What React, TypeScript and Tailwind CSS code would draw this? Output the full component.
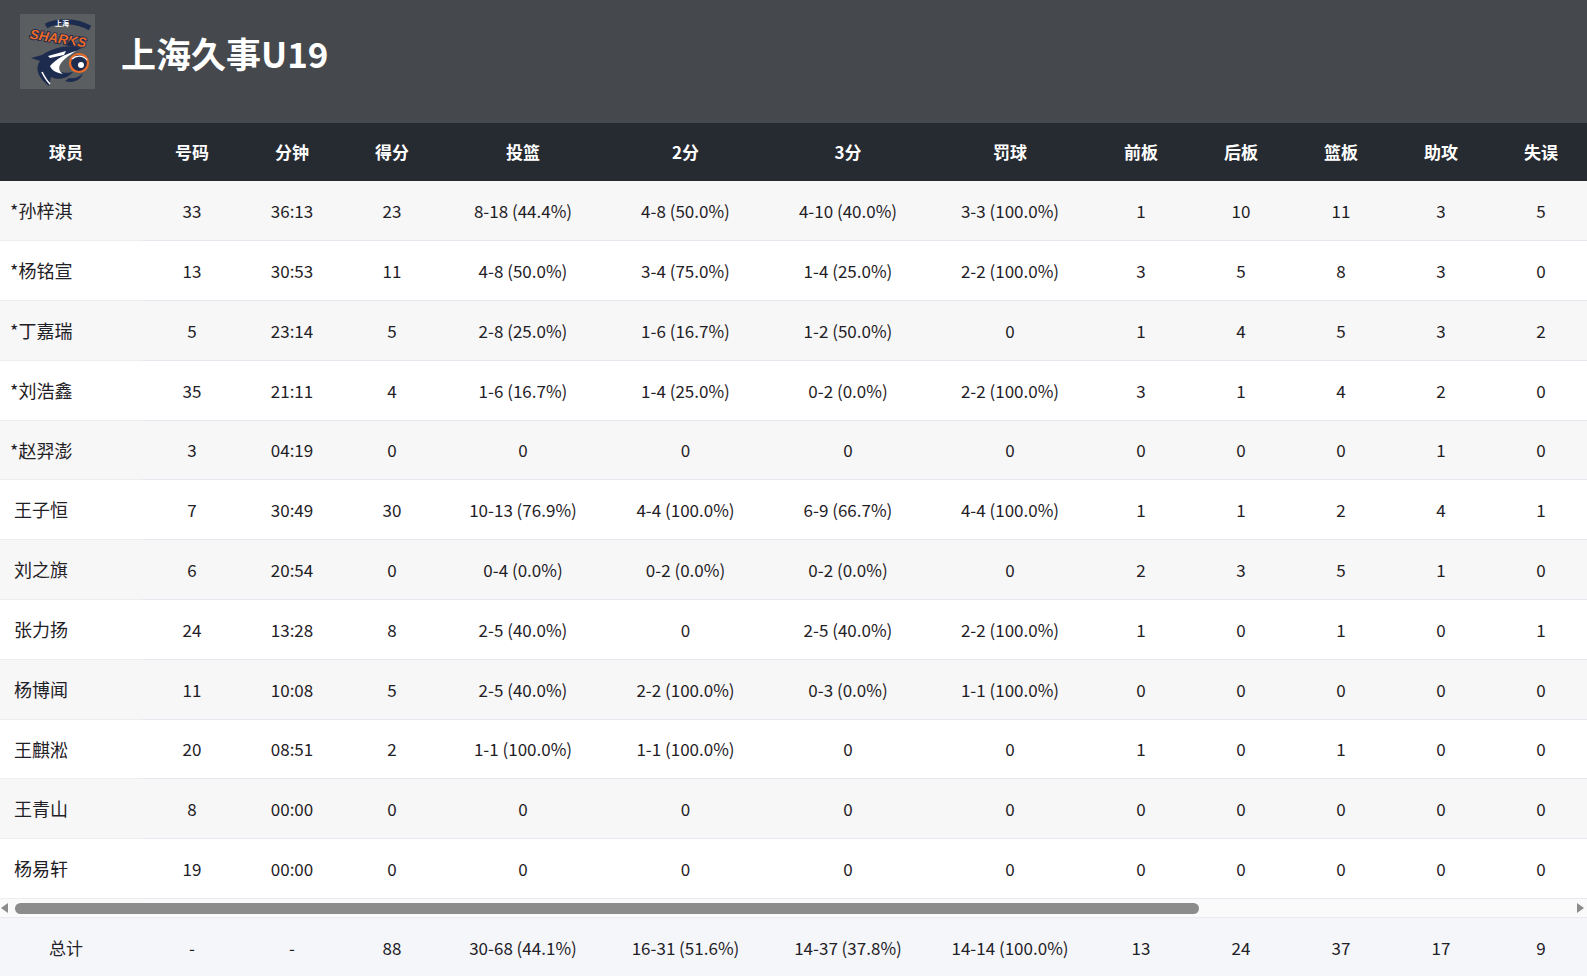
import React from "react"

type Row = {
  name: string
  starter: boolean
  no: string
  min: string
  pts: string
  fg: string
  two: string
  three: string
  ft: string
  oreb: string
  dreb: string
  reb: string
  ast: string
  tov: string
}

const rows: Row[] = [
  { name: "孙梓淇", starter: true, no: "33", min: "36:13", pts: "23", fg: "8-18 (44.4%)", two: "4-8 (50.0%)", three: "4-10 (40.0%)", ft: "3-3 (100.0%)", oreb: "1", dreb: "10", reb: "11", ast: "3", tov: "5" },
  { name: "杨铭宣", starter: true, no: "13", min: "30:53", pts: "11", fg: "4-8 (50.0%)", two: "3-4 (75.0%)", three: "1-4 (25.0%)", ft: "2-2 (100.0%)", oreb: "3", dreb: "5", reb: "8", ast: "3", tov: "0" },
  { name: "丁嘉瑞", starter: true, no: "5", min: "23:14", pts: "5", fg: "2-8 (25.0%)", two: "1-6 (16.7%)", three: "1-2 (50.0%)", ft: "0", oreb: "1", dreb: "4", reb: "5", ast: "3", tov: "2" },
  { name: "刘浩鑫", starter: true, no: "35", min: "21:11", pts: "4", fg: "1-6 (16.7%)", two: "1-4 (25.0%)", three: "0-2 (0.0%)", ft: "2-2 (100.0%)", oreb: "3", dreb: "1", reb: "4", ast: "2", tov: "0" },
  { name: "赵羿澎", starter: true, no: "3", min: "04:19", pts: "0", fg: "0", two: "0", three: "0", ft: "0", oreb: "0", dreb: "0", reb: "0", ast: "1", tov: "0" },
  { name: "王子恒", starter: false, no: "7", min: "30:49", pts: "30", fg: "10-13 (76.9%)", two: "4-4 (100.0%)", three: "6-9 (66.7%)", ft: "4-4 (100.0%)", oreb: "1", dreb: "1", reb: "2", ast: "4", tov: "1" },
  { name: "刘之旗", starter: false, no: "6", min: "20:54", pts: "0", fg: "0-4 (0.0%)", two: "0-2 (0.0%)", three: "0-2 (0.0%)", ft: "0", oreb: "2", dreb: "3", reb: "5", ast: "1", tov: "0" },
  { name: "张力扬", starter: false, no: "24", min: "13:28", pts: "8", fg: "2-5 (40.0%)", two: "0", three: "2-5 (40.0%)", ft: "2-2 (100.0%)", oreb: "1", dreb: "0", reb: "1", ast: "0", tov: "1" },
  { name: "杨博闻", starter: false, no: "11", min: "10:08", pts: "5", fg: "2-5 (40.0%)", two: "2-2 (100.0%)", three: "0-3 (0.0%)", ft: "1-1 (100.0%)", oreb: "0", dreb: "0", reb: "0", ast: "0", tov: "0" },
  { name: "王麒淞", starter: false, no: "20", min: "08:51", pts: "2", fg: "1-1 (100.0%)", two: "1-1 (100.0%)", three: "0", ft: "0", oreb: "1", dreb: "0", reb: "1", ast: "0", tov: "0" },
  { name: "王青山", starter: false, no: "8", min: "00:00", pts: "0", fg: "0", two: "0", three: "0", ft: "0", oreb: "0", dreb: "0", reb: "0", ast: "0", tov: "0" },
  { name: "杨易轩", starter: false, no: "19", min: "00:00", pts: "0", fg: "0", two: "0", three: "0", ft: "0", oreb: "0", dreb: "0", reb: "0", ast: "0", tov: "0" },
]

const headers = ["号码", "分钟", "得分", "投篮", "2分", "3分", "罚球", "前板", "后板", "篮板", "助攻", "失误"]

const totals = ["-", "-", "88", "30-68 (44.1%)", "16-31 (51.6%)", "14-37 (37.8%)", "14-14 (100.0%)", "13", "24", "37", "17", "9"]

function Cols() {
  return (
    <colgroup>
      <col className="w-[142px]" />
      <col className="w-[100px]" />
      <col className="w-[100px]" />
      <col className="w-[100px]" />
      <col className="w-[162px]" />
      <col className="w-[163px]" />
      <col className="w-[162px]" />
      <col className="w-[162px]" />
      <col className="w-[100px]" />
      <col className="w-[100px]" />
      <col className="w-[100px]" />
      <col className="w-[100px]" />
      <col className="w-[100px]" />
    </colgroup>
  )
}

function SharksLogo() {
  return (
    <svg width="75" height="75" viewBox="0 0 75 75">
      <rect width="75" height="75" fill="#5b5e61" />
      {/* small banner above the wordmark */}
      <path d="M26 12 C36 6 56 6 70 14" stroke="#1d2b4f" strokeWidth="5" fill="none" />
      <text x="35" y="12" fontSize="7" fontWeight="700" fill="#ffffff" fontFamily="'Noto Sans CJK SC', sans-serif">
        上海
      </text>
      <text
        x="10"
        y="29"
        fontSize="13.5"
        fontWeight="900"
        fontStyle="italic"
        fill="#ec6a27"
        stroke="#1d2b4f"
        strokeWidth="1.8"
        paintOrder="stroke"
        transform="rotate(9 38 22)"
        fontFamily="'Liberation Sans', sans-serif"
      >
        SHARKS
      </text>
      {/* shark body */}
      <path d="M62 34 C50 30 34 33 22 41 L11 44 L20 47 C14 55 19 65 29 72 L31 63 C39 67 48 64 53 58 C45 60 37 58 33 52 C39 45 50 39 62 34 Z" fill="#1d2b4f" />
      <path d="M56 37 C45 40 36 45 30 52 C32 57 37 59 43 60 C36 55 38 48 56 37 Z" fill="#ffffff" />
      <path d="M28 42 L46 37 L44 41 L30 44 Z" fill="#ffffff" />
      <path d="M46 31 L51 25 L54 33 Z" fill="#1d2b4f" />
      <path d="M22 58 C25 64 28 68 30 70" stroke="#ffffff" strokeWidth="1.6" fill="none" />
      {/* ball */}
      <circle cx="59" cy="49" r="9" fill="#1d2b4f" stroke="#ec6a27" strokeWidth="2.2" />
      <path d="M52 45 C56 41 63 41 67 46" stroke="#ffffff" strokeWidth="1.3" fill="none" />
      <circle cx="61" cy="51" r="3" fill="#ffffff" />
      {/* tail curl */}
      <path d="M45 67 C53 70 61 66 63 59 C60 63 55 65 49 64 Z" fill="#1d2b4f" />
    </svg>
  )
}

export default function App() {
  return (
    <div className="min-h-screen bg-white font-['Noto_Sans_CJK_SC','Noto_Sans',sans-serif] text-[#1f2126]">
      <header className="h-[123px] bg-[#45484c] flex items-start pt-[14px] pl-[20px] gap-[26px]">
        <SharksLogo />
        <h1 className="h-[77px] flex items-center text-[35px] font-bold text-white leading-none">上海久事U19</h1>
      </header>

      <div className="overflow-hidden">
        <table className="table-fixed border-collapse w-[1591px]">
          <Cols />
          <thead>
            <tr className="bg-[#262a31] text-white">
              <th className="h-[58px] pr-[10px] text-center text-[17px] font-bold">球员</th>
              {headers.map((h) => (
                <th key={h} className="h-[58px] text-center text-[17px] font-bold">
                  {h}
                </th>
              ))}
            </tr>
          </thead>
          <tbody>
            {rows.map((r, i) => {
              const cells = [r.no, r.min, r.pts, r.fg, r.two, r.three, r.ft, r.oreb, r.dreb, r.reb, r.ast, r.tov]
              return (
                <tr key={r.name} className={i % 2 === 0 ? "bg-[#f7f7f7]" : "bg-white"}>
                  <td className={"h-[59.8px] border-b border-[#edeef2] text-left text-[18px] " + (r.starter ? "pl-[10px]" : "pl-[14px]")}>
                    {r.starter ? "*" + r.name : r.name}
                  </td>
                  {cells.map((c, j) => (
                    <td key={j} className="h-[59.8px] border-b border-[#e6e8ef] text-center text-[17px]">
                      {c}
                    </td>
                  ))}
                </tr>
              )
            })}
          </tbody>
        </table>
      </div>

      {/* fake horizontal scrollbar */}
      <div className="h-[19px] bg-[#fafafa] border-b border-[#e9ebf0] flex items-center">
        <div className="w-[15px] flex justify-start pl-[1px]">
          <div className="w-0 h-0 border-y-[5px] border-y-transparent border-r-[7px] border-r-[#8c8c8c]" />
        </div>
        <div className="w-[1184px] h-[11px] rounded-full bg-[#8c8c8c]" />
        <div className="flex-1" />
        <div className="w-[10px] flex justify-start">
          <div className="w-0 h-0 border-y-[5px] border-y-transparent border-l-[7px] border-l-[#8c8c8c]" />
        </div>
      </div>

      <div className="overflow-hidden bg-[#f5f6fa]">
        <table className="table-fixed border-collapse w-[1591px]">
          <Cols />
          <tbody>
            <tr>
              <td className="h-[59px] pr-[10px] text-center text-[17px]">总计</td>
              {totals.map((t, j) => (
                <td key={j} className="h-[59px] text-center text-[17px]">
                  {t}
                </td>
              ))}
            </tr>
          </tbody>
        </table>
      </div>
    </div>
  )
}
